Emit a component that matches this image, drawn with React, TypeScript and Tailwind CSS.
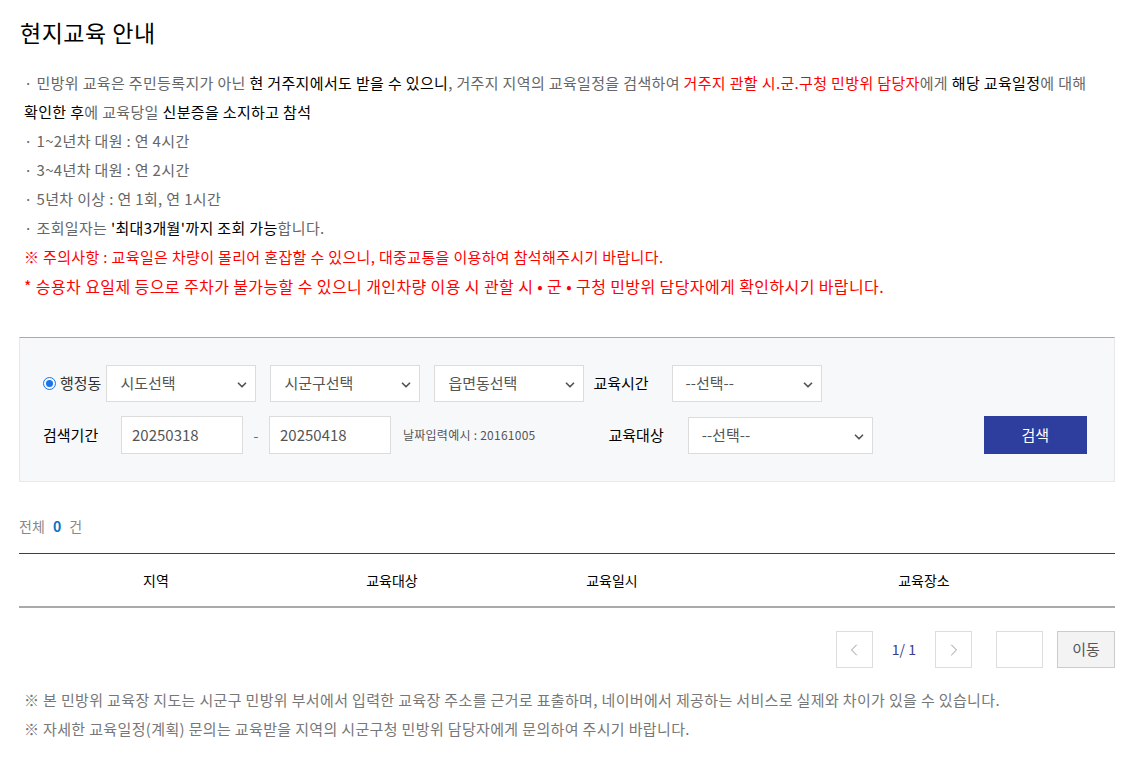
import React from 'react';
import { ChevronDown, ChevronLeft, ChevronRight } from 'lucide-react';

const font = { fontFamily: '"Noto Sans CJK KR", "Noto Sans", sans-serif' };

const Select = ({ label, w }: { label: string; w: string }) => (
  <div className={`relative ${w} h-[37px] bg-white border border-[#dcdcdc] flex items-center`}>
    <span className="pl-[13px] text-[15px] text-[#555]">{label}</span>
    <ChevronDown className="absolute right-[6px] top-[12px] h-[14px] w-[14px] text-[#555]" strokeWidth={3} />
  </div>
);

const App: React.FC = () => {
  return (
    <div className="bg-white w-[1132px] min-h-[767px] pl-[19px] pr-[17px] pt-[14px] text-[#666]" style={font}>
      {/* Title */}
      <h1 className="text-[23px] text-black leading-[36px] pl-[1px] tracking-[0.5px]">현지교육 안내</h1>

      {/* Notice */}
      <div className="mt-[18px] pl-[5px] text-[15px] leading-[29px] tracking-[0.35px]">
        <p>
          · 민방위 교육은 주민등록지가 아닌 <span className="text-black">현 거주지에서도 받을 수 있으니</span>, 거주지 지역의 교육일정을 검색하여{' '}
          <span className="text-[#ff0000]">거주지 관할 시.군.구청 민방위 담당자</span>에게{' '}
          <span className="text-black">해당 교육일정</span>에 대해
          <br />
          <span className="text-black">확인한 후</span>에 교육당일 <span className="text-black">신분증을 소지하고 참석</span>
        </p>
        <p>· 1~2년차 대원 : 연 4시간</p>
        <p>· 3~4년차 대원 : 연 2시간</p>
        <p>· 5년차 이상 : 연 1회, 연 1시간</p>
        <p>
          · 조회일자는 <span className="text-black">'최대3개월'까지 조회 가능</span>합니다.
        </p>
        <p className="text-[#ff0000]">※ 주의사항 : 교육일은 차량이 몰리어 혼잡할 수 있으니, 대중교통을 이용하여 참석해주시기 바랍니다.</p>
        <p className="text-[#ff0000] text-[16px] leading-[31px] tracking-[0.4px]">
          * 승용차 요일제 등으로 주차가 불가능할 수 있으니 개인차량 이용 시 관할 시 • 군 • 구청 민방위 담당자에게 확인하시기 바랍니다.
        </p>
      </div>

      {/* Search box */}
      <div className="mt-[35px] border-t border-t-[#aaa] border-x border-b border-x-[#e6e8ec] border-b-[#e6e8ec] bg-[#f7f8fa] h-[145px] pt-[27px] pl-[23px]">
        <div className="flex items-center">
          <span className="flex items-center text-[15px] text-[#333]">
            <span className="w-[13px] h-[13px] rounded-full border border-[#1a73e8] flex items-center justify-center mr-[4px]">
              <span className="w-[7px] h-[7px] rounded-full bg-[#1a73e8]" />
            </span>
            행정동
          </span>
          <div className="ml-[5px]">
            <Select label="시도선택" w="w-[150px]" />
          </div>
          <div className="ml-[14px]">
            <Select label="시군구선택" w="w-[150px]" />
          </div>
          <div className="ml-[14px]">
            <Select label="읍면동선택" w="w-[150px]" />
          </div>
          <span className="ml-[9px] text-[15px] text-black">교육시간</span>
          <div className="ml-[23px]">
            <Select label="--선택--" w="w-[150px]" />
          </div>
        </div>

        <div className="flex items-center mt-[14px]">
          <span className="text-[15px] text-black w-[78px]">검색기간</span>
          <div className="w-[122px] h-[38px] bg-white border border-[#dcdcdc] flex items-center pl-[10px] text-[15px] text-[#555]">
            20250318
          </div>
          <span className="w-[26px] text-center text-[14px] text-[#666]">-</span>
          <div className="w-[122px] h-[38px] bg-white border border-[#dcdcdc] flex items-center pl-[10px] text-[15px] text-[#555]">
            20250418
          </div>
          <span className="ml-[12px] text-[12px] text-[#555] tracking-[0.25px]">날짜입력예시 : 20161005</span>
          <span className="ml-[73px] text-[15px] text-black">교육대상</span>
          <div className="ml-[24px]">
            <Select label="--선택--" w="w-[185px]" />
          </div>
          <button className="ml-[111px] w-[103px] h-[38px] bg-[#2d3e9e] text-white text-[15px]">검색</button>
        </div>
      </div>

      {/* Count */}
      <div className="mt-[34px] text-[14px] text-[#888]">
        전체 <span className="ml-[5px] mr-[5px] text-[#0a74c4] font-bold">0</span> 건
      </div>

      {/* Table */}
      <div className="mt-[16px] border-t border-t-[#2c3a8c] border-b-2 border-b-[#aaa] h-[55px] flex items-center text-[14px] text-black">
        <div className="w-[274px] text-center">지역</div>
        <div className="w-[198px] text-center">교육대상</div>
        <div className="w-[242px] text-center">교육일시</div>
        <div className="flex-1 text-center">교육장소</div>
      </div>

      {/* Pagination */}
      <div className="mt-[23px] flex items-center justify-end">
        <button className="w-[37px] h-[37px] border border-[#ddd] bg-white flex items-center justify-center">
          <ChevronLeft className="w-[20px] h-[20px] text-[#999]" strokeWidth={1.2} />
        </button>
        <span className="mx-[19px] text-[14px] text-[#3c3c8c]">1/ 1</span>
        <button className="w-[37px] h-[37px] border border-[#ddd] bg-white flex items-center justify-center">
          <ChevronRight className="w-[20px] h-[20px] text-[#999]" strokeWidth={1.2} />
        </button>
        <div className="ml-[24px] w-[47px] h-[37px] border border-[#ddd] bg-white" />
        <button className="ml-[14px] w-[58px] h-[37px] border border-[#ccc] bg-[#f3f3f3] text-[15px] text-[#555]">이동</button>
      </div>

      {/* Footer notes */}
      <div className="mt-[17px] pl-[5px] text-[15px] leading-[29px] text-[#777] tracking-[0.35px]">
        <p>※ 본 민방위 교육장 지도는 시군구 민방위 부서에서 입력한 교육장 주소를 근거로 표출하며, 네이버에서 제공하는 서비스로 실제와 차이가 있을 수 있습니다.</p>
        <p>※ 자세한 교육일정(계획) 문의는 교육받을 지역의 시군구청 민방위 담당자에게 문의하여 주시기 바랍니다.</p>
      </div>
    </div>
  );
};

export default App;
